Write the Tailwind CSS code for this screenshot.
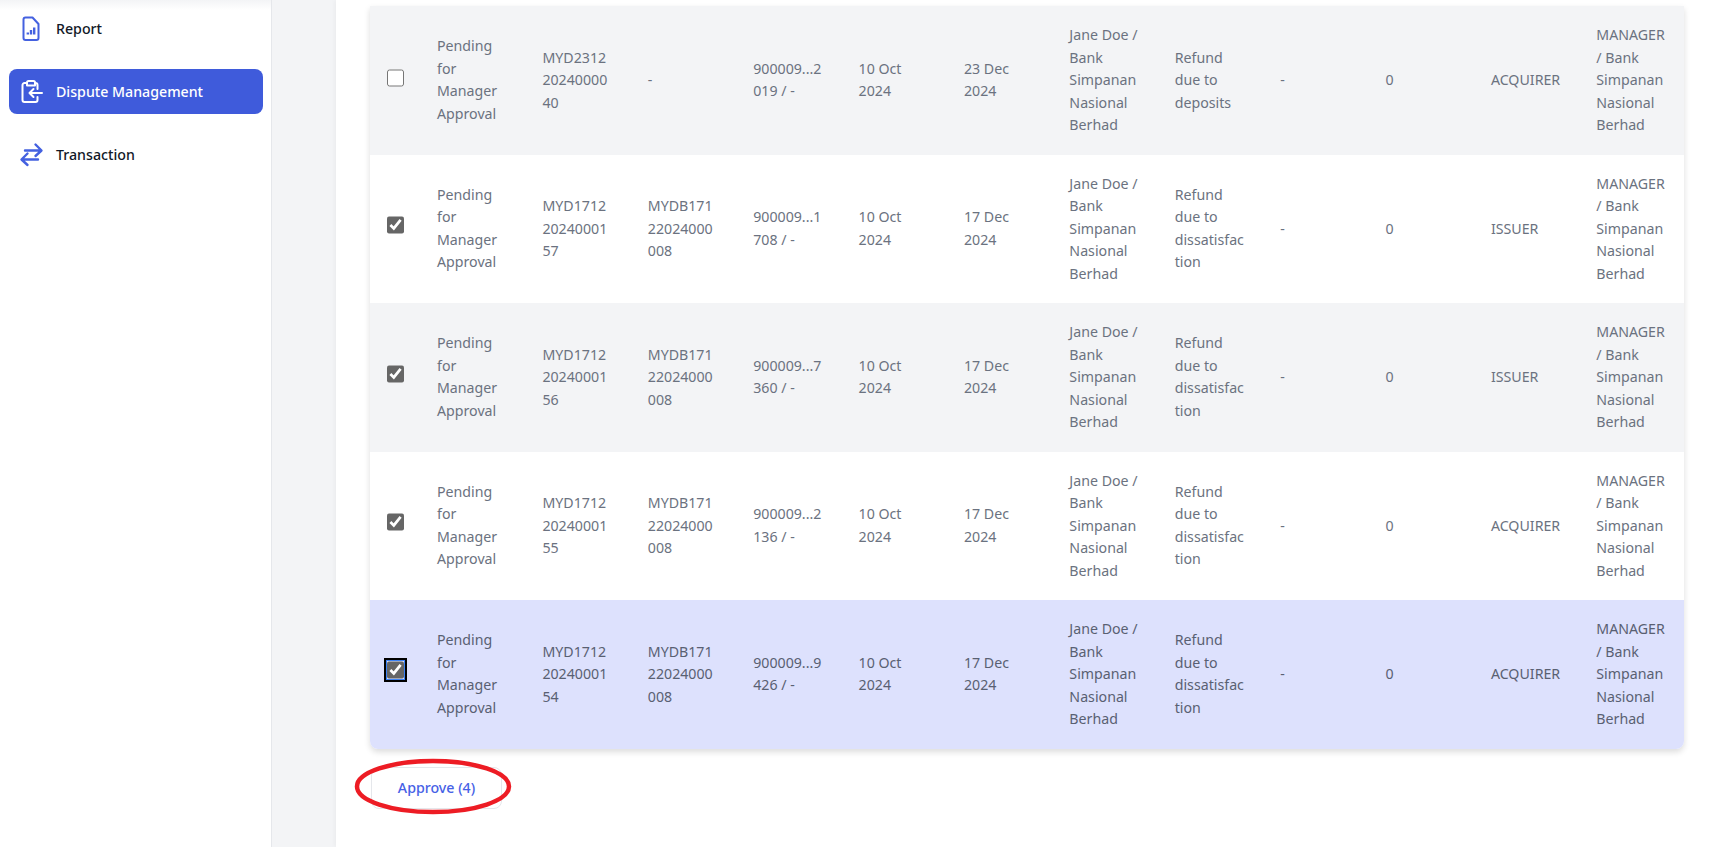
<!doctype html>
<html>
<head>
<meta charset="utf-8">
<script src="https://cdn.jsdelivr.net/npm/@tailwindcss/browser@4"></script>
</head>
<body class="h-screen overflow-hidden bg-white font-['Noto_Sans','Liberation_Sans',sans-serif]">
<div class="relative flex h-[847px] w-[1714px] overflow-hidden">
  <aside class="relative z-10 w-[272px] shrink-0 border-r border-[#e5e7eb] bg-white pl-[9px] pr-[8px] text-[14.200px] font-medium text-[#111827]">
    <div class="absolute left-0 top-0 h-[10px] w-full bg-gradient-to-b from-[#f3f4f6] to-white"></div>
    <nav class="relative">
      <a class="mt-[6px] flex h-[45px] items-center gap-[12px] pl-[10px]">
        <svg class="h-[25px] w-[25px]" viewBox="0 0 25 25" fill="none" stroke="#4461e0" stroke-width="2" stroke-linejoin="round"><path d="M4.500 3.500a2 2 0 0 1 2-2h7l6 6.500v14a2 2 0 0 1-2 2h-11a2 2 0 0 1-2-2z"/><path d="M8.800 18.500v-2M12 18.500v-4.500M15.200 18.500v-7" stroke-width="2.400"/></svg>
        <span>Report</span>
      </a>
      <a class="mt-[18px] flex h-[45px] items-center gap-[12px] rounded-lg bg-[#3f5bdb] pl-[10px] text-white">
        <svg class="h-[25px] w-[25px]" viewBox="0 0 25 25" fill="none" stroke="white" stroke-width="2" stroke-linecap="round" stroke-linejoin="round"><path d="M8 4H5.500A2 2 0 0 0 3.500 6v15a2 2 0 0 0 2 2h11a2 2 0 0 0 2-2v-3M16 4h.5a2 2 0 0 1 2 2v4"/><path d="M8 3.500A1.500 1.500 0 0 1 9.500 2h5A1.500 1.500 0 0 1 16 3.500V6.500H8z"/><path d="M23 14H10.500M14.500 10 10.500 14l4 4"/></svg>
        <span>Dispute Management</span>
      </a>
      <a class="mt-[18px] flex h-[45px] items-center gap-[12px] pl-[10px]">
        <svg class="h-[25px] w-[25px]" viewBox="0 0 25 25" fill="none" stroke="#4461e0" stroke-width="2.400" stroke-linecap="round" stroke-linejoin="round"><path d="M6 8.500H22M16.500 2.500 22.500 8.500 16.500 14"/><path d="M19 17.500H3M8.500 11.500 2.500 17.500 8.500 23"/></svg>
        <span>Transaction</span>
      </a>
    </nav>
  </aside>
  <div class="w-[64px] shrink-0 bg-[#f3f4f6]"></div>
  <main class="flex-1 bg-white pl-[34px] pt-[6px] shadow-[-2px_0_4px_rgba(0,0,0,0.03)]">
    <div class="w-[1314px] overflow-hidden rounded-b-lg shadow-[0_3px_6px_rgba(0,0,0,0.14)]">
      <table class="w-[1315.800px] table-fixed border-collapse text-left text-[14.200px] leading-[22.500px] text-[#6b7280] [overflow-wrap:anywhere]">
        <colgroup><col class="w-[51px]"><col span="12"></colgroup>
        <tbody>
          <tr class="h-[148.500px] bg-[#f3f4f6]">
            <td class="pl-[17px]"><input type="checkbox" class="mb-[5px] block h-[18px] w-[17px] accent-[#666666]"></td>
            <td class="px-4">Pending for Manager Approval</td><td class="px-4">MYD2312 20240000 40</td><td class="px-4">-</td><td class="px-4">900009...2 019 / -</td><td class="px-4">10 Oct 2024</td><td class="px-4">23 Dec 2024</td><td class="px-4">Jane Doe / Bank Simpanan Nasional Berhad</td><td class="px-4">Refund due to deposits</td><td class="px-4">-</td><td class="px-4">0</td><td class="px-4">ACQUIRER</td><td class="px-4">MANAGER / Bank Simpanan Nasional Berhad</td>
          </tr>
          <tr class="h-[148.500px] bg-white">
            <td class="pl-[17px]"><input type="checkbox" checked class="mb-[7px] block h-[18px] w-[17px] accent-[#666666]"></td>
            <td class="px-4">Pending for Manager Approval</td><td class="px-4">MYD1712 20240001 57</td><td class="px-4">MYDB171 22024000 008</td><td class="px-4">900009...1 708 / -</td><td class="px-4">10 Oct 2024</td><td class="px-4">17 Dec 2024</td><td class="px-4">Jane Doe / Bank Simpanan Nasional Berhad</td><td class="px-4">Refund due to dissatisfac tion</td><td class="px-4">-</td><td class="px-4">0</td><td class="px-4">ISSUER</td><td class="px-4">MANAGER / Bank Simpanan Nasional Berhad</td>
          </tr>
          <tr class="h-[148.500px] bg-[#f3f4f6]">
            <td class="pl-[17px]"><input type="checkbox" checked class="mb-[7px] block h-[18px] w-[17px] accent-[#666666]"></td>
            <td class="px-4">Pending for Manager Approval</td><td class="px-4">MYD1712 20240001 56</td><td class="px-4">MYDB171 22024000 008</td><td class="px-4">900009...7 360 / -</td><td class="px-4">10 Oct 2024</td><td class="px-4">17 Dec 2024</td><td class="px-4">Jane Doe / Bank Simpanan Nasional Berhad</td><td class="px-4">Refund due to dissatisfac tion</td><td class="px-4">-</td><td class="px-4">0</td><td class="px-4">ISSUER</td><td class="px-4">MANAGER / Bank Simpanan Nasional Berhad</td>
          </tr>
          <tr class="h-[148.500px] bg-white">
            <td class="pl-[17px]"><input type="checkbox" checked class="mb-[7px] block h-[18px] w-[17px] accent-[#666666]"></td>
            <td class="px-4">Pending for Manager Approval</td><td class="px-4">MYD1712 20240001 55</td><td class="px-4">MYDB171 22024000 008</td><td class="px-4">900009...2 136 / -</td><td class="px-4">10 Oct 2024</td><td class="px-4">17 Dec 2024</td><td class="px-4">Jane Doe / Bank Simpanan Nasional Berhad</td><td class="px-4">Refund due to dissatisfac tion</td><td class="px-4">-</td><td class="px-4">0</td><td class="px-4">ACQUIRER</td><td class="px-4">MANAGER / Bank Simpanan Nasional Berhad</td>
          </tr>
          <tr class="h-[148.500px] bg-[#dde1fd] text-[#596072]">
            <td class="pl-[17px]"><input type="checkbox" checked class="mb-[8px] block h-[18px] w-[17px] rounded-[3px] accent-[#666666] outline outline-[#3b82f6] shadow-[0_0_0_3px_black]"></td>
            <td class="px-4">Pending for Manager Approval</td><td class="px-4">MYD1712 20240001 54</td><td class="px-4">MYDB171 22024000 008</td><td class="px-4">900009...9 426 / -</td><td class="px-4">10 Oct 2024</td><td class="px-4">17 Dec 2024</td><td class="px-4">Jane Doe / Bank Simpanan Nasional Berhad</td><td class="px-4">Refund due to dissatisfac tion</td><td class="px-4">-</td><td class="px-4">0</td><td class="px-4">ACQUIRER</td><td class="px-4">MANAGER / Bank Simpanan Nasional Berhad</td>
          </tr>
        </tbody>
      </table>
    </div>
    <button class="ml-px mt-[18px] h-[42px] w-[131px] rounded-lg border border-[#e5e7eb] bg-white text-[14.200px] font-medium text-[#4661e6]">Approve (4)</button>
  </main>
  <svg class="pointer-events-none absolute left-[354px] top-[757px] h-[60px] w-[160px]" viewBox="0 0 160 60" fill="none"><ellipse cx="79" cy="29.500" rx="76" ry="25.500" stroke="#ed1c24" stroke-width="4.500"/></svg>
</div>
</body>
</html>
